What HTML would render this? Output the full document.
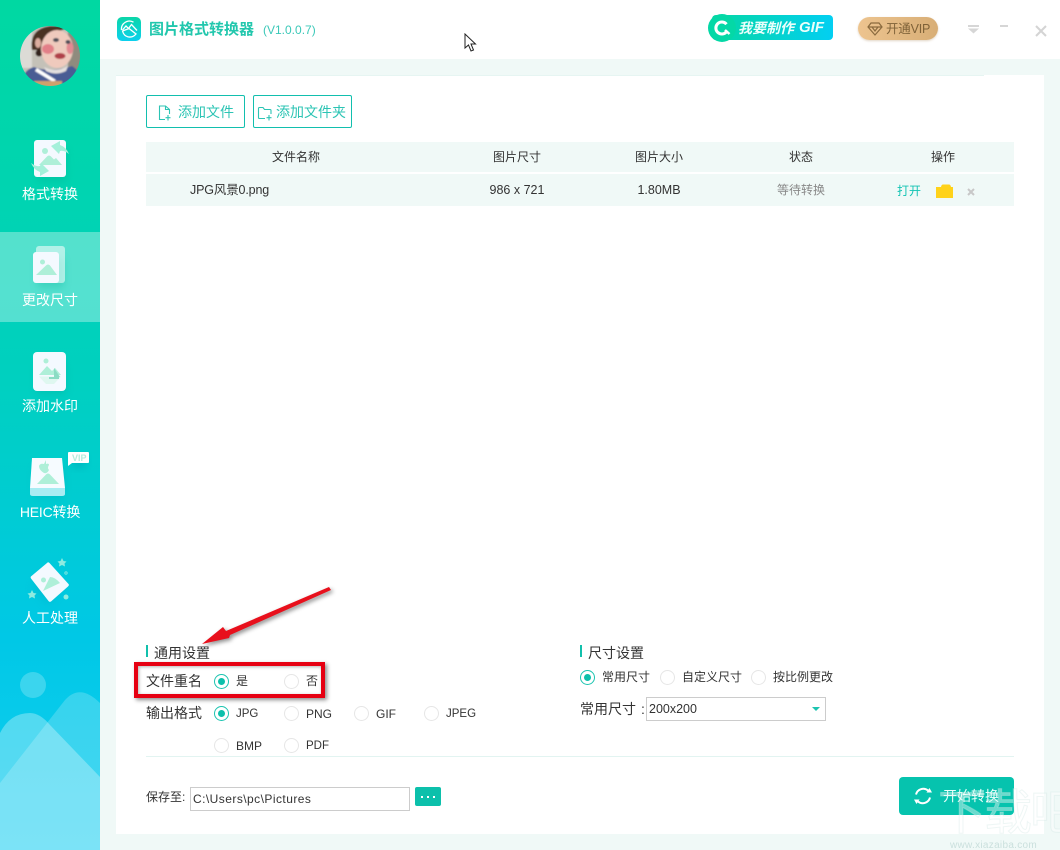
<!DOCTYPE html>
<html><head><meta charset="utf-8">
<style>
html,body{margin:0;padding:0;background:#fff}
#p{position:relative;width:1060px;height:850px;overflow:hidden;background:#fff;font-family:"Liberation Sans","Noto Sans CJK SC",sans-serif;font-size:13px;color:#333}
.a{position:absolute;white-space:nowrap;line-height:18px}
.c{text-align:center}
.r{position:absolute;width:13px;height:13px;border:1.5px solid #e6e6e6;border-radius:50%;background:#fff}
.r.on{border-color:#1cc4b0}
.r.on:after{content:"";position:absolute;left:3px;top:3px;width:7px;height:7px;border-radius:50%;background:#0cc0ab}
.nav{position:absolute;left:0;width:100px;text-align:center;color:#fff;font-size:14px;line-height:20px}
.btn{position:absolute;box-sizing:border-box;height:33px;top:95px;border:1px solid #12bfae;border-radius:2px;background:#fff;color:#2cc4b4;font-size:14px;line-height:33px}
</style></head><body><div id="p">

<!-- sidebar -->
<div style="position:absolute;left:0;top:0;width:100px;height:850px;background:linear-gradient(180deg,#00d8a2 0%,#00d0c0 45%,#00c8e6 75%,#14cdf2 100%);overflow:hidden">
<svg width="100" height="850" style="position:absolute;left:0;top:0">
<circle cx="33" cy="685" r="13" fill="#fff" fill-opacity=".22"/>
<path d="M0 783L65 700Q80 683 100 703V850H0Z" fill="#fff" fill-opacity=".2"/>
<path d="M0 733Q10 713 30 713Q40 713 50 725L100 777V850H0Z" fill="#fff" fill-opacity=".3"/>
</svg>
<div style="position:absolute;left:0;top:232px;width:100px;height:90px;background:rgba(255,255,255,.33)"></div>
</div>

<!-- avatar -->
<svg style="position:absolute;left:20px;top:26px" width="60" height="60" viewBox="0 0 60 60">
<defs><clipPath id="av"><circle cx="30" cy="30" r="30"/></clipPath><filter id="bl" x="-10%" y="-10%" width="120%" height="120%"><feGaussianBlur stdDeviation=".7"/></filter></defs>
<g clip-path="url(#av)"><g filter="url(#bl)">
<rect x="-2" y="-2" width="64" height="64" fill="#c4c1b8"/>
<rect x="48" y="-2" width="14" height="64" fill="#8f8b7e"/>
<rect x="-2" y="-2" width="14" height="44" fill="#dcdbd6"/>
<path d="M12 24Q9 3 30 0L54 0Q42 4 30 8Q24 12 21 24Z" fill="#4a3024"/>
<ellipse cx="18" cy="17" rx="3" ry="5" fill="#dcae9f"/>
<circle cx="19" cy="27" r="3.500" fill="#33201a"/>
<ellipse cx="37" cy="23" rx="16" ry="19" fill="#efcabd"/>
<ellipse cx="28" cy="23" rx="6" ry="5" fill="#e27f88"/>
<ellipse cx="50" cy="22" rx="3.500" ry="6" fill="#e38a92"/>
<ellipse cx="36" cy="14" rx="3" ry="2" fill="#4b4e58"/><ellipse cx="48" cy="16" rx="2.500" ry="2" fill="#4b4e58"/>
<ellipse cx="40" cy="30" rx="5.500" ry="3" fill="#b04048"/>
<path d="M0 62Q2 44 14 41Q30 47 52 40Q62 46 62 62Z" fill="#4a5b94"/>
<path d="M24 41Q36 47 48 40L46 45Q36 50 26 45Z" fill="#e4e0de"/>
<path d="M17 42L36 54L33 56L15 45Z" fill="#fff"/>
<rect x="14" y="55" width="28" height="7" fill="#cfa06c"/>
</g></g></svg>

<!-- nav icons -->
<svg style="position:absolute;left:0;top:130px" width="100" height="500" viewBox="0 130 100 500">
<defs><filter id="sh" x="-40%" y="-40%" width="180%" height="180%"><feGaussianBlur stdDeviation="4"/></filter><filter id="sf"><feGaussianBlur stdDeviation=".35"/></filter></defs>
<!-- 1 -->
<rect x="37" y="148" width="30" height="34" rx="3" fill="#00a98c" opacity=".28" filter="url(#sh)"/>
<rect x="34" y="140" width="32" height="37" rx="3" fill="#f4f9ff"/>
<circle cx="45" cy="151" r="3" fill="#aeefd8"/>
<path d="M39 165L47 156.500Q49 154.500 51 156.500L54 159.500L56 158L62 165Z" fill="#aeefd8"/>
<g filter="url(#sf)" fill="#a5f0da"><path d="M51 146L60 141L60 145Q66 147 69 154Q64 150 60 151L59 154Z"/><path d="M49 171L40 176L40 172Q34 170 31 163Q36 167 40 166L41 163Z"/></g>
<!-- 2 -->
<rect x="37" y="258" width="27" height="30" rx="3" fill="#00a98c" opacity=".25" filter="url(#sh)"/>
<rect x="36" y="246" width="29" height="37" rx="3" fill="#fff" fill-opacity=".55"/>
<rect x="33" y="252" width="26" height="31" rx="3" fill="#f4f9ff"/>
<circle cx="42.500" cy="262" r="2.500" fill="#aeefd8"/>
<path d="M36 275L46 265.500Q48 263.500 50 265.500L57 275Z" fill="#aeefd8"/>
<!-- 3 -->
<rect x="36" y="360" width="30" height="34" rx="3" fill="#00a08c" opacity=".25" filter="url(#sh)"/>
<rect x="33" y="352" width="33" height="39" rx="4" fill="#f4f9ff"/>
<circle cx="46" cy="361" r="2.500" fill="#aeefd8"/>
<path d="M39 375L47 366L52 371L55 368L61 375Z" fill="#aeefd8"/>
<path d="M39 376.500H61L54 384H46Z" fill="#dff7f0"/>
<path d="M54 368L60 377H54Z" fill="#8bdcc4"/>
<rect x="49" y="377" width="10" height="2" fill="#8bdcc4"/>
<!-- 4 -->
<rect x="34" y="466" width="30" height="32" rx="3" fill="#009cb0" opacity=".25" filter="url(#sh)"/>
<rect x="72" y="456" width="14" height="12" fill="#009cb0" opacity=".4" filter="url(#sh)"/>
<path d="M30 488L32 458H62L65 488Z" fill="#f6fbff"/>
<path d="M30 488H65V494Q65 496 62 496H33Q30 496 30 494Z" fill="#a8ecf2"/>
<path d="M37 484L46 474.500Q48 472.500 50 474.500L59 484Z" fill="#aeefd8"/>
<path d="M44 473Q39 470 39 466Q40 463 44 464L46 460L46 464Q49 463 49 465Q47 468 49 470Q47 474 44 473Z" fill="#aeefd8"/>
<path d="M68 453Q68 452 69 452H88Q89 452 89 453V462Q89 463 88 463H72L68 466Z" fill="#fff"/>
<text x="72" y="461" font-family="Liberation Sans" font-size="9" font-weight="700" fill="#b5ecdc">VIP</text>
<!-- 5 -->
<path d="M38 572L60 592L48 606L32 590Z" fill="#00a8c0" opacity=".25" filter="url(#sh)"/>
<path d="M47 563Q48 561.500 49.500 563L68.500 584Q69.500 585 68 586.500L51 601.500Q49.500 602.500 48.500 601L31 578.500Q30 577 31.500 576Z" fill="#f4f9ff"/>
<circle cx="43.500" cy="580" r="2.500" fill="#aeefd8"/>
<path d="M43 591L50 577Q55 577 60 583Z" fill="#aeefd8"/>
<path d="M62 558l1.500 3 3 .5-2 2 .5 3-3-1.500-3 1.500 .5-3-2-2 3-.5Z" fill="#8eebe0"/>
<path d="M32 590l1.500 3 3 .5-2 2 .5 3-3-1.500-3 1.500 .5-3-2-2 3-.5Z" fill="#8eebe0"/>
<circle cx="66" cy="573" r="1.200" fill="none" stroke="#8eebe0" stroke-width=".8"/>
<circle cx="66" cy="597" r="2.500" fill="#8eebe0"/>
</svg>
<div class="nav" style="top:184px">格式转换</div>
<div class="nav" style="top:290px">更改尺寸</div>
<div class="nav" style="top:396px">添加水印</div>
<div class="nav" style="top:502px;letter-spacing:-.2px">HEIC转换</div>
<div class="nav" style="top:608px">人工处理</div>

<!-- title bar -->
<svg style="position:absolute;left:117px;top:17px" width="25" height="25" viewBox="0 0 25 25">
<defs><linearGradient id="lg" x1="0" y1="0" x2="0" y2="1"><stop offset="0" stop-color="#0bd6a8"/><stop offset="1" stop-color="#0cd0ee"/></linearGradient></defs>
<rect width="24" height="24" rx="5" fill="url(#lg)"/>
<path d="M4.500 13A8 8 0 0 1 16.500 5.200" fill="none" stroke="#fff" stroke-width="1.300"/>
<path d="M5.500 13L9 9L11.500 11.500L14.500 7.500L20 13.500" fill="none" stroke="#fff" stroke-width="1.300"/>
<path d="M5.500 14L12 11.500L19 17Q16 20.500 12 20Q7 19.500 5.500 14Z" fill="none" stroke="#fff" stroke-width="1.300"/>
</svg>
<div class="a" style="left:149px;top:21px;font-size:15px;font-weight:700;color:#22c7ad">图片格式转换器</div>
<div class="a" style="left:263px;top:21px;font-size:12px;color:#3ac8b8">(V1.0.0.7)</div>

<!-- cursor -->
<svg style="position:absolute;left:464px;top:33px" width="14" height="20" viewBox="0 0 14 20"><path d="M1 1V15L4.500 12L7 18L9.500 17L7 11H11.500Z" fill="#fff" stroke="#222" stroke-width="1"/></svg>

<!-- gif -->
<div style="position:absolute;left:712px;top:15px;width:121px;height:25px;border-radius:4px;background:linear-gradient(90deg,#04d7a4,#03cff2)"></div>
<svg style="position:absolute;left:708px;top:14px" width="30" height="29" viewBox="0 0 30 29"><circle cx="14" cy="14" r="14" fill="#04d8a6"/><path d="M18.500 10.200A6 6 0 1 0 18.500 17.800" fill="none" stroke="#fff" stroke-width="3"/><path d="M17 16L21.500 20" fill="none" stroke="#fff" stroke-width="2.500"/></svg>
<div class="a" style="left:738px;top:19px;color:#e9fffb;font-size:14px;font-weight:700;font-style:italic">我要制作</div>
<div class="a" style="left:799px;top:19px;color:#e9fffb;font-size:15px;font-weight:700;font-style:italic">GIF</div>

<!-- vip -->
<div style="position:absolute;left:858px;top:17px;width:80px;height:23px;border-radius:12px;background:linear-gradient(90deg,#edc48f,#d8ae76);box-shadow:0 1px 2px rgba(180,150,110,.4)"></div>
<svg style="position:absolute;left:867px;top:22px" width="16" height="14" viewBox="0 0 16 14"><path d="M4 1H12L15 5L8 13L1 5Z M1 5H15 M5 5L8 9L11 5" fill="none" stroke="#8a6a3e" stroke-width="1.200"/></svg>
<div class="a" style="left:886px;top:20px;font-size:12.500px;color:#7f6238;letter-spacing:-.2px">开通VIP</div>

<!-- win controls -->
<svg style="position:absolute;left:960px;top:18px" width="90" height="24" viewBox="0 0 90 24">
<rect x="8" y="7" width="11" height="2" fill="#d6d6d6"/>
<path d="M8 10.500H19L13.500 15.500Z" fill="#d6d6d6"/>
<rect x="40" y="7" width="8" height="2" fill="#d6d6d6"/>
<path d="M76 8L86 18M86 8L76 18" stroke="#d4d4d4" stroke-width="2" fill="none"/>
</svg>

<!-- content bg -->
<div style="position:absolute;left:100px;top:59px;width:960px;height:791px;background:#f0f9f7"></div>
<div style="position:absolute;left:116px;top:75px;width:928px;height:759px;background:#fff"></div>
<div style="position:absolute;left:116px;top:75px;width:868px;height:1px;background:#e6f5f2"></div>

<!-- buttons -->
<div class="btn" style="left:146px;width:99px;padding-left:31px">添加文件</div>
<div class="btn" style="left:253px;width:99px;padding-left:22px">添加文件夹</div>
<svg style="position:absolute;left:157px;top:104px" width="16" height="18" viewBox="0 0 16 18"><path d="M8 15.500H2.500V2H8.500L12.500 5.500V10M8.500 2V5.500H12.500" fill="none" stroke="#2cc4b4" stroke-width="1.100"/><path d="M11 11V16.500M8.500 13.700H13.500" stroke="#2cc4b4" stroke-width="1.100"/></svg>
<svg style="position:absolute;left:257px;top:104px" width="16" height="18" viewBox="0 0 16 18"><path d="M8 14.500H2.500Q1.500 14.500 1.500 13.500V4.500Q1.500 3.500 2.500 3.500H6L7.500 5.500H13Q14 5.500 14 6.500V10" fill="none" stroke="#2cc4b4" stroke-width="1.100"/><path d="M12 11V16.500M9.500 13.700H14.500" stroke="#2cc4b4" stroke-width="1.100"/></svg>

<!-- table -->
<div style="position:absolute;left:146px;top:142px;width:868px;height:30px;background:#f0f9f7"></div>
<div style="position:absolute;left:146px;top:174px;width:868px;height:32px;background:#f0f9f7"></div>
<div class="a c" style="left:246px;width:100px;top:148px;font-size:12px">文件名称</div>
<div class="a c" style="left:467px;width:100px;top:148px;font-size:12px">图片尺寸</div>
<div class="a c" style="left:609px;width:100px;top:148px;font-size:12px">图片大小</div>
<div class="a c" style="left:751px;width:100px;top:148px;font-size:12px">状态</div>
<div class="a c" style="left:893px;width:100px;top:148px;font-size:12px">操作</div>
<div class="a" style="left:190px;top:181px;font-size:12.500px;letter-spacing:-.15px">JPG风景0.png</div>
<div class="a c" style="left:467px;width:100px;top:181px;font-size:12.500px">986 x 721</div>
<div class="a c" style="left:609px;width:100px;top:181px;font-size:12.500px">1.80MB</div>
<div class="a c" style="left:751px;width:100px;top:181px;font-size:12px;color:#888">等待转换</div>
<div class="a" style="left:897px;top:182px;font-size:12px;color:#14c4b4">打开</div>
<svg style="position:absolute;left:936px;top:184px" width="18" height="15" viewBox="0 0 18 15"><path d="M0 3H5Q5.500 0.500 7 0.500H13Q14.500 0.500 15 3H17V14H0Z" fill="#ffd21a"/></svg>
<svg style="position:absolute;left:966px;top:187px" width="10" height="10" viewBox="0 0 10 10"><path d="M2 2L8 8M8 2L2 8" stroke="#c8c8c8" stroke-width="2"/></svg>

<!-- general settings -->
<div style="position:absolute;left:146px;top:645px;width:2px;height:12px;background:#12c0ac"></div>
<div class="a" style="left:154px;top:644px;font-size:14px;color:#333">通用设置</div>
<div class="a" style="left:146px;top:672px;font-size:14px;color:#333">文件重名</div>
<div class="r on" style="left:214px;top:674px"></div><div class="a" style="left:236px;top:672px;font-size:12px">是</div>
<div class="r" style="left:284px;top:674px"></div><div class="a" style="left:306px;top:672px;font-size:12px">否</div>
<div class="a" style="left:146px;top:704px;font-size:14px;color:#333">输出格式</div>
<div class="r on" style="left:214px;top:706px"></div><div class="a" style="left:236px;top:705px;font-size:11.500px">JPG</div>
<div class="r" style="left:284px;top:706px"></div><div class="a" style="left:306px;top:705px;font-size:12px">PNG</div>
<div class="r" style="left:354px;top:706px"></div><div class="a" style="left:376px;top:705px;font-size:12px">GIF</div>
<div class="r" style="left:424px;top:706px"></div><div class="a" style="left:446px;top:705px;font-size:11.500px">JPEG</div>
<div class="r" style="left:214px;top:738px"></div><div class="a" style="left:236px;top:737px;font-size:12px">BMP</div>
<div class="r" style="left:284px;top:738px"></div><div class="a" style="left:306px;top:737px;font-size:11.500px">PDF</div>

<!-- size settings -->
<div style="position:absolute;left:580px;top:645px;width:2px;height:12px;background:#12c0ac"></div>
<div class="a" style="left:588px;top:644px;font-size:14px;color:#333">尺寸设置</div>
<div class="r on" style="left:580px;top:670px"></div><div class="a" style="left:602px;top:668px;font-size:12px">常用尺寸</div>
<div class="r" style="left:660px;top:670px"></div><div class="a" style="left:682px;top:668px;font-size:12px">自定义尺寸</div>
<div class="r" style="left:751px;top:670px"></div><div class="a" style="left:773px;top:668px;font-size:12px">按比例更改</div>
<div class="a" style="left:580px;top:700px;font-size:14px">常用尺寸</div>
<div class="a" style="left:641px;top:700px;font-size:14px">:</div>
<div style="position:absolute;box-sizing:border-box;left:646px;top:697px;width:180px;height:24px;border:1px solid #ccc"></div>
<div class="a" style="left:649px;top:700px;font-size:12.500px">200x200</div>
<div style="position:absolute;left:812px;top:707px;width:0;height:0;border-left:4px solid transparent;border-right:4px solid transparent;border-top:4px solid #1cc4b0"></div>

<div style="position:absolute;left:146px;top:756px;width:868px;height:1px;background:#e2f4f1"></div>

<!-- save -->
<div class="a" style="left:146px;top:788px;font-size:12px">保存至:</div>
<div style="position:absolute;box-sizing:border-box;left:190px;top:787px;width:220px;height:24px;border:1px solid #ccc"></div>
<div class="a" style="left:193px;top:790px;font-size:12px;letter-spacing:.45px">C:\Users\pc\Pictures</div>
<div style="position:absolute;left:415px;top:787px;width:26px;height:19px;background:#0cc0ab;border-radius:2px"></div>
<svg style="position:absolute;left:415px;top:787px" width="26" height="19"><rect x="6" y="9" width="2" height="2" fill="#fff"/><rect x="12" y="9" width="2" height="2" fill="#fff"/><rect x="18" y="9" width="2" height="2" fill="#fff"/></svg>

<!-- start -->
<div style="position:absolute;left:899px;top:777px;width:115px;height:38px;background:#06c3ae;border-radius:4px"></div>
<svg style="position:absolute;left:912px;top:785px" width="22" height="22" viewBox="0 0 22 22"><path d="M4 9.500A7.500 7.500 0 0 1 16 5.500M18 12.500A7.500 7.500 0 0 1 6 16.500" fill="none" stroke="#fff" stroke-width="2"/><path d="M14.500 7.500H20L17.500 3Z M7.500 14.500H2L4.500 19Z" fill="#fff"/></svg>
<div class="a" style="left:943px;top:787px;font-size:14px;color:#e9fffb">开始转换</div>

<!-- red highlight box -->
<div style="position:absolute;box-sizing:border-box;left:134px;top:662px;width:191px;height:36px;border:4px solid #e60012;box-shadow:2px 2px 4px rgba(0,0,0,.45),inset 1px 1px 3px rgba(0,0,0,.3)"></div>
<!-- arrow -->
<svg style="position:absolute;left:190px;top:580px;filter:drop-shadow(2px 2px 2px rgba(0,0,0,.45))" width="150" height="70" viewBox="190 580 150 70">
<path d="M331 590L230 635L229 638L202 644L223 627L226 631L329 587Z" fill="#e8101c"/>
</svg>

<!-- watermark -->
<div class="a" style="left:938px;top:786px;font-size:48px;line-height:56px;color:rgba(255,255,255,.4);-webkit-text-stroke:1px rgba(205,228,225,.35);letter-spacing:-2px">下载吧</div>
<div class="a" style="left:950px;top:841px;font-size:10px;line-height:10px;color:rgba(190,215,212,.75);letter-spacing:.3px">www.xiazaiba.com</div>
</div></body></html>
